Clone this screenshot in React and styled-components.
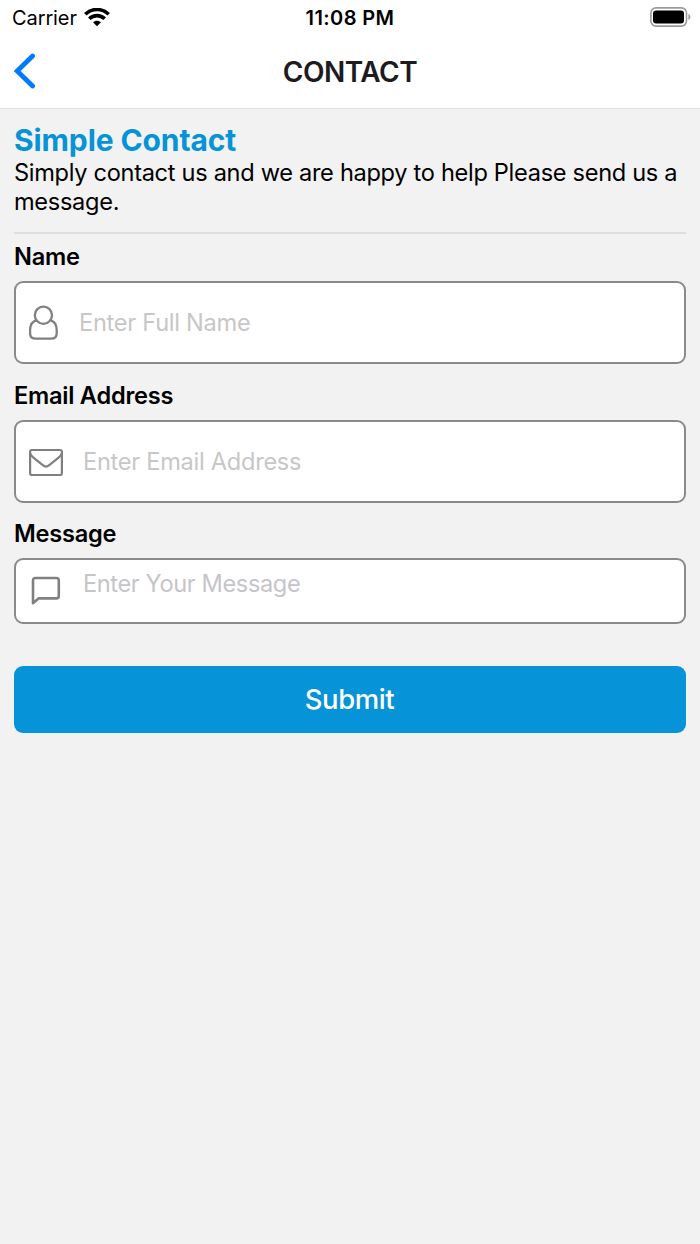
import React from "react";
import styled, { createGlobalStyle } from "styled-components";

const GlobalStyle = createGlobalStyle`
    * {
        box-sizing: border-box;
    }

    body {
        margin: 0;
        background: #f2f2f2;
        color: #000;
        font-family: Inter, "Liberation Sans", sans-serif;
    }
`;

const Screen = styled.div`
    display: flex;
    flex-direction: column;
    min-height: 1244px;
`;

const StatusBar = styled.div`
    display: grid;
    grid-template-columns: 1fr auto 1fr;
    align-items: center;
    height: 36px;
    padding: 0 9px 0 12px;
    background: #fff;
    font-size: 20px;
`;

const Carrier = styled.div`
    display: flex;
    align-items: center;
    gap: 7px;
    letter-spacing: -0.1px;
`;

const Clock = styled.div`
    margin-right: 3px;
    font-weight: 600;
    letter-spacing: 0.4px;
`;

const BatterySlot = styled.div`
    display: flex;
    justify-content: flex-end;
    padding-bottom: 2px;
`;

const Header = styled.header`
    display: grid;
    grid-template-columns: 1fr auto 1fr;
    align-items: center;
    height: 73px;
    padding: 0 14px 1px;
    background: #fff;
    border-bottom: 1px solid #dedede;
`;

const BackButton = styled.button`
    display: flex;
    width: 24px;
    padding: 0 0 1px;
    border: 0;
    background: none;
`;

const HeaderTitle = styled.h1`
    margin: 0;
    color: #1c1c1e;
    font-size: 28px;
    font-weight: 600;
    line-height: 34px;
    letter-spacing: -0.5px;
`;

const Content = styled.main`
    padding: 13px 14px 0;
`;

const Title = styled.h2`
    margin: 0;
    color: #0693d7;
    font-size: 30px;
    font-weight: 700;
    line-height: 36px;
    letter-spacing: -0.1px;
`;

const Intro = styled.p`
    margin: 0;
    font-size: 23.6px;
    line-height: 29px;
    letter-spacing: -0.31px;
    white-space: nowrap;
`;

const Divider = styled.hr`
    height: 2px;
    margin: 16px 0 0;
    border: 0;
    background: #dedede;
`;

const Form = styled.form`
    display: flex;
    flex-direction: column;
`;

const Label = styled.label`
    padding-top: ${({ $top }) => $top}px;
    font-size: 23.6px;
    font-weight: 600;
    line-height: 30px;
    letter-spacing: -0.25px;
`;

const InputBox = styled.div`
    display: flex;
    align-items: ${({ $multiline }) => ($multiline ? "flex-start" : "center")};
    gap: ${({ $gap }) => $gap}px;
    height: ${({ $multiline }) => ($multiline ? 66 : 83)}px;
    margin-top: 9px;
    padding: ${({ $multiline }) => ($multiline ? "7px 12px 0 15px" : "0 12px 0 13px")};
    border: 2px solid #8a8a8a;
    border-radius: 9px;
    background: #fff;
`;

const Input = styled.input`
    flex: 1;
    min-width: 0;
    height: 32px;
    padding: 0;
    border: 0;
    outline: 0;
    background: none;
    font: inherit;
    font-size: 23.6px;
    letter-spacing: ${({ $spacing }) => $spacing || -0.27}px;

    &::placeholder {
        color: ${({ $tint }) => $tint || "#c7c7c7"};
    }
`;

const MessageIconSlot = styled.span`
    display: flex;
    padding-top: 9px;
`;

const SubmitButton = styled.button`
    height: 67px;
    margin-top: 42px;
    padding: 0 1px 1px 0;
    border: 0;
    border-radius: 9px;
    background: #0693d7;
    color: #fff;
    font-family: inherit;
    font-size: 27.5px;
    font-weight: 500;
    letter-spacing: -0.4px;
`;

const WifiIcon = () => (
    <svg width="26" height="20" viewBox="0 0 26 20" fill="none">
        <path d="M1.3 6.3C7.8-.1 18.2-.1 24.7 6.3" stroke="#000" strokeWidth="3.6" />
        <path d="M5.3 10.8c4.4-4.2 11-4.2 15.400 0" stroke="#000" strokeWidth="3.6" />
        <path d="M13 18.2l-4-3.900c2.200-2.100 5.800-2.100 8 0z" fill="#000" />
    </svg>
);

const BatteryIcon = () => (
    <svg width="41" height="20" viewBox="0 0 41 20">
        <rect x=".9" y=".9" width="35.6" height="18.2" rx="5" fill="none" stroke="#9b9b9b" strokeWidth="1.6" />
        <rect x="3" y="3.4" width="31" height="13" rx="3" fill="#000" />
        <path d="M38.4 7v6c2.6-1 2.6-5 0-6z" fill="#9b9b9b" />
    </svg>
);

const BackIcon = () => (
    <svg width="24" height="36" viewBox="0 0 24 36" fill="none">
        <path d="M18.6 3L3.200 18l15.400 15" stroke="#007aff" strokeWidth="4.8" strokeLinecap="round" />
    </svg>
);

const PersonIcon = () => (
    <svg width="30" height="36" viewBox="0 0 30 36" fill="none" stroke="#808080" strokeWidth="2.3">
        <circle cx="14.4" cy="10.2" r="8.600" />
        <path d="M7 15.400C3 16.800 1.100 20.600 1.100 25v3.200c0 3.600 2 5.500 5.500 5.500h15.600c3.500 0 5.500-1.900 5.500-5.500V25c0-4.400-1.900-8.200-5.900-9.600" />
    </svg>
);

const MailIcon = () => (
    <svg width="34" height="28" viewBox="0 0 34 28" fill="none" stroke="#808080" strokeWidth="2.200">
        <rect x="1.100" y="2" width="31.800" height="25" rx="1.800" />
        <path d="M1.200 5.200c.6 2 1.600 3.200 3.200 4.500l9.400 7.500c2.300 1.900 4.100 1.900 6.400 0l9.400-7.500c1.600-1.300 2.600-2.500 3.200-4.500" />
    </svg>
);

const MessageIcon = () => (
    <svg width="30" height="30" viewBox="0 0 30 30" fill="none" stroke="#808080" strokeWidth="2.6" strokeLinejoin="round">
        <path d="M2 27.2V4.500C2 2.900 2.900 2 4.500 2h20.800c1.600 0 2.500.9 2.500 2.500v15.400c0 1.600-.9 2.500-2.500 2.500H7.500z" />
    </svg>
);

const App = () => {
    return (
        <Screen>
            <GlobalStyle />
            <StatusBar>
                <Carrier>
                    Carrier
                    <WifiIcon />
                </Carrier>
                <Clock>11:08 PM</Clock>
                <BatterySlot>
                    <BatteryIcon />
                </BatterySlot>
            </StatusBar>
            <Header>
                <BackButton aria-label="Back">
                    <BackIcon />
                </BackButton>
                <HeaderTitle>CONTACT</HeaderTitle>
            </Header>
            <Content>
                <Title>Simple Contact</Title>
                <Intro>
                    Simply contact us and we are happy to help Please send us a
                    <br />
                    message.
                </Intro>
                <Divider />
                <Form onSubmit={(e) => e.preventDefault()}>
                    <Label htmlFor="name" $top={8}>Name</Label>
                    <InputBox $gap={20}>
                        <PersonIcon />
                        <Input id="name" placeholder="Enter Full Name" />
                    </InputBox>
                    <Label htmlFor="email" $top={17}>Email Address</Label>
                    <InputBox $gap={20}>
                        <MailIcon />
                        <Input id="email" placeholder="Enter Email Address" />
                    </InputBox>
                    <Label htmlFor="message" $top={16}>Message</Label>
                    <InputBox $multiline $gap={22}>
                        <MessageIconSlot>
                            <MessageIcon />
                        </MessageIconSlot>
                        <Input id="message" placeholder="Enter Your Message" $tint="#c5c5c9" $spacing={-0.38} />
                    </InputBox>
                    <SubmitButton type="submit">Submit</SubmitButton>
                </Form>
            </Content>
        </Screen>
    );
};
export default App;
